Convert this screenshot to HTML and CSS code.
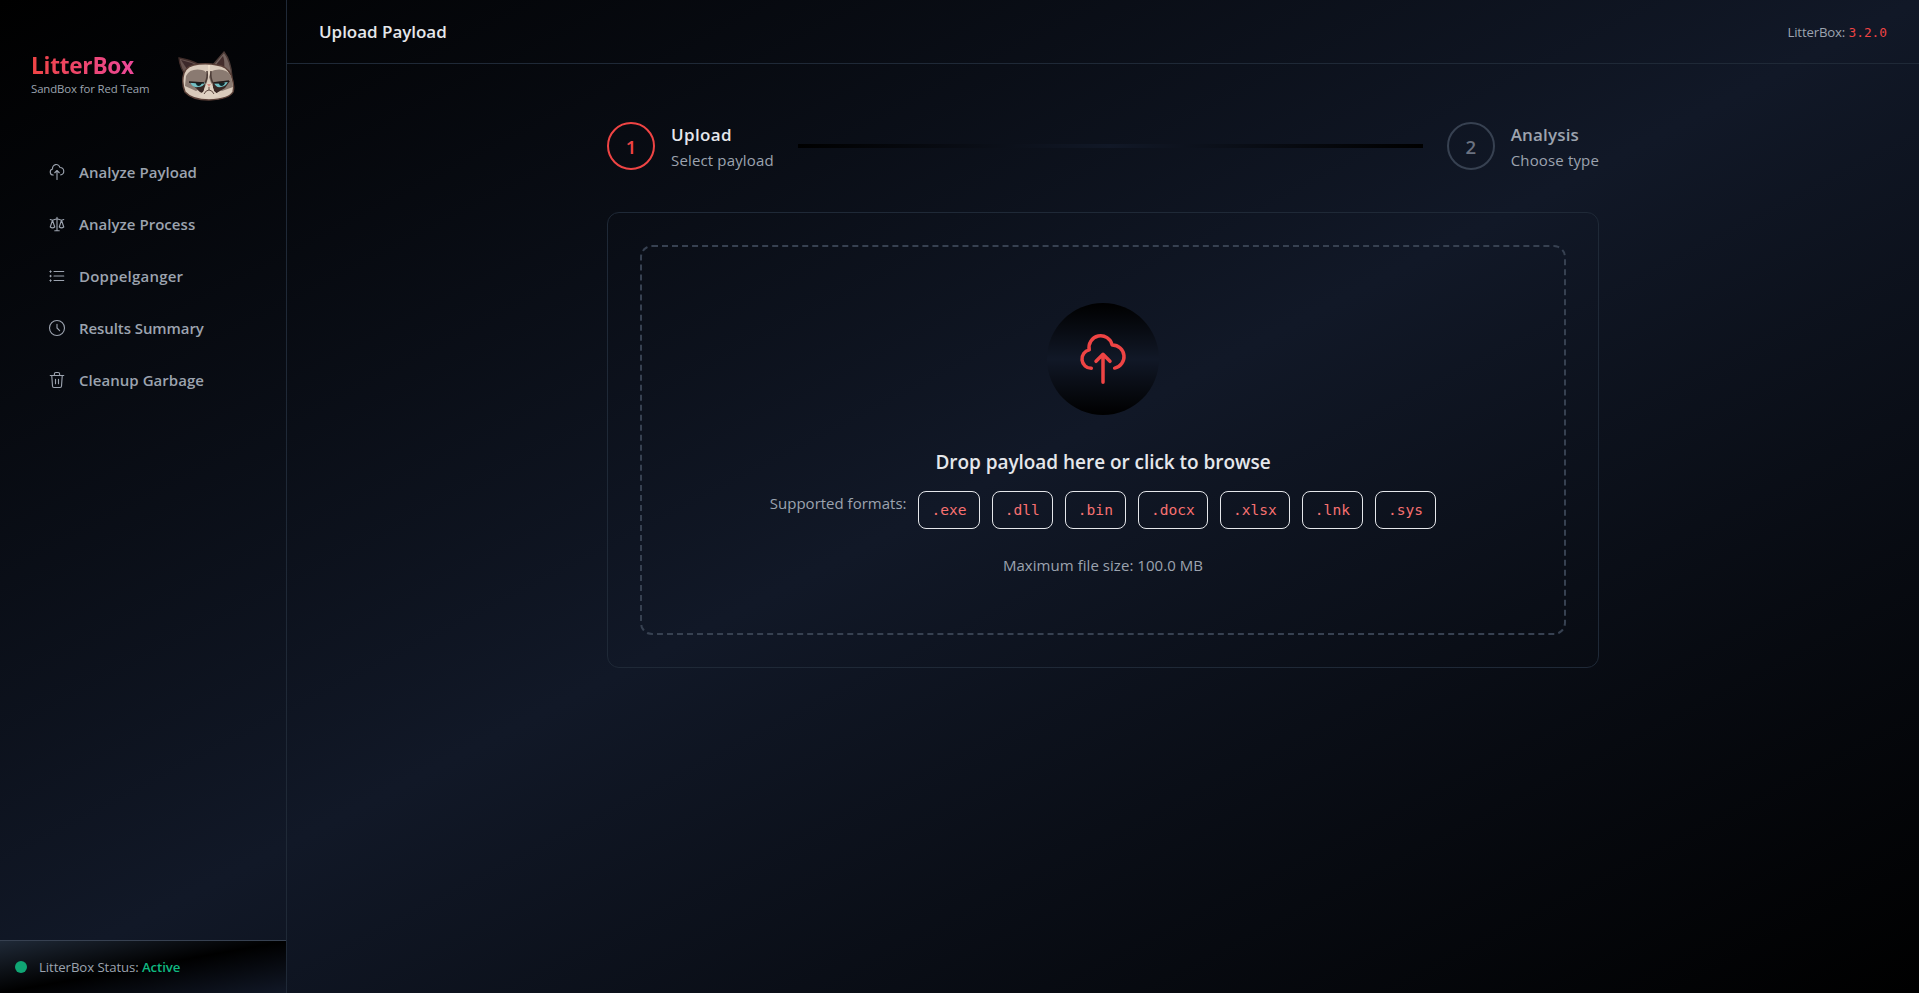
FILE: index.html
```html
<!DOCTYPE html>
<html lang="en">
<head>
<meta charset="utf-8">
<title>LitterBox</title>
<link rel="stylesheet" href="styles.css">
</head>
<body>
<svg class="sprite" width="0" height="0" aria-hidden="true">
  <symbol id="cloud-up" viewBox="0 0 24 24"><path d="M7 16a4 4 0 0 1-.88-7.903A5 5 0 1 1 15.9 6L16 6a5 5 0 0 1 1 9.9M15 13l-3-3m0 0l-3 3m3-3v12"/></symbol>
</svg>
<div class="app">
  <aside class="sidebar">
    <div class="brand">
      <div class="brand-text">
        <div class="brand-name">LitterBox</div>
        <div class="brand-sub">SandBox for Red Team</div>
      </div>
      <svg class="cat" viewBox="0 0 58 52">
        <path d="M2 8Q14 10 23 15L10 27Q3 19 2 8Z" fill="#67534f" stroke="#402c29" stroke-width="1.4"/>
        <path d="M4 10Q13 12 21 16L10 19Z" fill="#3d292a"/>
        <path d="M35 16L47 2Q54 11 55 27L44 22Z" fill="#75645f" stroke="#4a3935" stroke-width="1.4"/>
        <path d="M38 16L46 6Q48 11 47 20Z" fill="#432d2c"/>
        <path d="M7 23Q10 15 22 14Q32 13 40 15Q50 16 54 25Q58 35 56 42Q52 49 32 50Q15 50 8 42Q4 32 7 23Z" fill="#d9cabb" stroke="#5a4038" stroke-width="1.5"/>
        <path d="M9 26Q13 18 25 20Q30 21 31 27L29 36L19 41L8 36Z" fill="#8a7a71"/>
        <path d="M54 26Q49 18 38 20Q33 21 32 27L35 36L45 41L56 37Z" fill="#8a7a71"/>
        <path d="M12 32L27 32L28 36L26 43Q23 43 20 39ZM36 32L53 31L48 38L38 44L36 38Z" fill="#382724"/>
        <path d="M13 32Q15 38 21 37Q27 37 28 32L22 34Z" fill="#73c0c5"/>
        <path d="M37 33Q39 38 44 37Q50 36 51 31L44 34Z" fill="#73c0c5"/>
        <path d="M19 33h6q-1 3-3 3q-3 0-3-3M42 33h6q-1 3-3 3q-3 0-3-3" fill="#102528"/>
        <path d="M12 32L27 33M37 33L52 31" stroke="#211b1b" stroke-width="1.7"/>
        <path d="M30 21Q31 28 28 33M34 21Q33 28 36 33" fill="none" stroke="#4b3b36" stroke-width="1.5"/>
        <path d="M31 15L32 27L33 15Z" fill="#efe0cc"/>
        <path d="M29 34L32 32L35 34L37 41L43 46L32 49L21 46L27 41Z" fill="#dfd1c2"/>
        <path d="M30 34h4l-2 3Z" fill="#d28d83"/>
        <path d="M32 37v3q-3 0-5 4M32 40q3 0 5 4" fill="none" stroke="#5c473f"/>
      </svg>
    </div>
    <nav class="nav">
      <a class="nav-item"><svg class="icon"><use href="#cloud-up"/></svg><span>Analyze Payload</span></a>
      <a class="nav-item"><svg class="icon" viewBox="0 0 24 24"><path d="M3 6l3 1m0 0l-3 9a5.002 5.002 0 0 0 6.001 0M6 7l3 9M6 7l6-2m6 2l3-1m-3 1l-3 9a5.002 5.002 0 0 0 6.001 0M18 7l3 9m-3-9l-6-2m0-2v2m0 16V5m0 16H9m3 0h3"/></svg><span>Analyze Process</span></a>
      <a class="nav-item"><svg class="icon" viewBox="0 0 24 24"><path d="M8 6h13M8 12h13M8 18h13M2.5 6h1.8M2.5 12h1.8M2.5 18h1.8M3.4 5v2M3.4 11v2M3.4 17v2"/></svg><span class="wide">Doppelganger</span></a>
      <a class="nav-item"><svg class="icon" viewBox="0 0 24 24"><circle cx="12" cy="12" r="10"/><path d="M12 7v5l3.5 3.5"/></svg><span class="tight">Results Summary</span></a>
      <a class="nav-item"><svg class="icon" viewBox="0 0 24 24"><path d="M3 6h18M19 6l-1 14a2 2 0 0 1-2 2H8a2 2 0 0 1-2-2L5 6M8.500 6V4a2 2 0 0 1 2-2h3a2 2 0 0 1 2 2v2M10 11v6M14 11v6"/></svg><span>Cleanup Garbage</span></a>
    </nav>
    <div class="status">
      <span class="dot"></span>
      <span class="status-text">LitterBox Status: <b>Active</b></span>
    </div>
  </aside>
  <div class="content">
    <header class="topbar">
      <h1>Upload Payload</h1>
      <div class="version">LitterBox: <code>3.2.0</code></div>
    </header>
    <main class="main">
      <div class="steps">
        <div class="step active">
          <div class="num">1</div>
          <div class="step-text"><div class="step-title">Upload</div><div class="step-sub">Select payload</div></div>
        </div>
        <div class="connector"></div>
        <div class="step">
          <div class="num">2</div>
          <div class="step-text"><div class="step-title">Analysis</div><div class="step-sub">Choose type</div></div>
        </div>
      </div>
      <section class="card">
        <div class="drop">
          <div class="drop-icon"><svg><use href="#cloud-up"/></svg></div>
          <h2>Drop payload here or click to browse</h2>
          <div class="formats">
            <span class="formats-label">Supported formats:</span>
            <code>.exe</code><code>.dll</code><code>.bin</code><code>.docx</code><code>.xlsx</code><code>.lnk</code><code>.sys</code>
          </div>
          <p class="max">Maximum file size: 100.0 MB</p>
        </div>
      </section>
    </main>
  </div>
</div>
</body>
</html>
```
FILE: styles.css
```css
* { box-sizing: border-box; margin: 0; padding: 0; }
body {
  height: 993px;
  overflow: hidden;
  font-family: "Open Sans", "Noto Sans", sans-serif;
  font-size: 15px;
  line-height: 24px;
  color: #9ca3af;
  background: linear-gradient(to bottom right, #000, #111827 50%, #000);
}
.sprite { position: absolute; }
.app { display: flex; height: 993px; }
.sidebar {
  width: 287px;
  flex: none;
  display: flex;
  flex-direction: column;
  border-right: 1px solid #1f2937;
}
.brand { display: flex; height: 146px; padding: 50px 0 0 31px; }
.brand-text { width: 146px; }
.brand-name {
  width: 104px;
  font-size: 22.6px;
  font-weight: 700;
  line-height: 32px;
  letter-spacing: -0.25px;
  white-space: nowrap;
  background: linear-gradient(to right, #ef4444, #ec4899);
  -webkit-background-clip: text;
  background-clip: text;
  color: transparent;
}
.brand-sub { font-size: 11.4px; line-height: 13px; letter-spacing: -0.12px; white-space: nowrap; }
.cat { width: 58px; height: 52px; }
.nav { flex: 1; display: flex; flex-direction: column; }
.nav-item {
  display: flex;
  align-items: center;
  gap: 13px;
  height: 52px;
  padding-left: 48px;
  font-weight: 600;
  letter-spacing: 0.04px;
  color: #9ca3af;
}
.wide { letter-spacing: 0.22px; }
.tight { letter-spacing: -0.08px; }
.icon { width: 18px; height: 18px; }
svg.icon, .drop-icon svg {
  fill: none;
  stroke: currentColor;
  stroke-width: 1.5;
  stroke-linecap: round;
  stroke-linejoin: round;
  overflow: visible;
}
.status {
  display: flex;
  align-items: center;
  gap: 12px;
  height: 53px;
  padding-left: 15px;
  border-top: 1px solid #374151;
  background: linear-gradient(to bottom right, #1f2937, #000 50%, #111827);
  font-size: 13.2px;
  letter-spacing: -0.08px;
}
.status b { color: #10b981; font-weight: 600; }
.dot { width: 12px; height: 12px; border-radius: 50%; background: #10a674; }
.content { flex: 1; }
.topbar {
  display: flex;
  align-items: center;
  justify-content: space-between;
  height: 64px;
  padding: 0 32px;
  border-bottom: 1px solid #1f2937;
}
h1 { padding-top: 1px; font-size: 17px; font-weight: 600; letter-spacing: -0.03px; color: #e5e7eb; }
.version { font-size: 13.2px; letter-spacing: -0.15px; }
.version code { color: #ef4444; font: 12.8px "DejaVu Sans Mono", monospace; letter-spacing: 0; }
.main { width: 992px; margin: 0 auto; padding-top: 56px; }
.steps { display: flex; align-items: center; height: 52px; }
.step { display: flex; align-items: center; gap: 16px; white-space: nowrap; }
.num {
  display: flex;
  align-items: center;
  justify-content: center;
  width: 48px;
  height: 48px;
  padding-top: 2px;
  border: 2px solid #374151;
  border-radius: 50%;
  font-size: 18.6px;
  font-weight: 600;
  color: #6b7280;
}
.step-text { padding-top: 2px; }
.step-title { font-size: 17px; line-height: 26px; font-weight: 600; letter-spacing: 0.15px; }
.step-sub { line-height: 24px; letter-spacing: 0.15px; }
.active .step-title { letter-spacing: 0.35px; }
.active .num { border-color: #ef4444; color: #ef4444; }
.active .step-title { color: #e5e7eb; }
.connector {
  flex: 1;
  height: 4px;
  margin: 0 24px;
  background: linear-gradient(to right, #000, #111827 50%, #000);
}
.card {
  height: 456px;
  margin-top: 40px;
  padding: 32px;
  border: 1px solid #1f2937;
  border-radius: 12px;
}
.drop {
  display: flex;
  flex-direction: column;
  align-items: center;
  height: 390px;
  padding-top: 56px;
  border: 2px dashed #374151;
  border-radius: 12px;
}
.drop-icon {
  display: flex;
  align-items: center;
  justify-content: center;
  width: 112px;
  height: 112px;
  border-radius: 50%;
  color: #ef4444;
  background: linear-gradient(to bottom, #000, #111827 50%, #000);
}
.drop-icon svg { width: 56px; height: 56px; }
h2 { margin-top: 33px; font-size: 19px; line-height: 28px; font-weight: 600; letter-spacing: -0.04px; color: #e5e7eb; }
.formats { display: flex; gap: 12px; margin-top: 15px; }
.formats code {
  height: 38px;
  padding: 0 12px;
  border: 1px solid #e5e7eb;
  border-radius: 8px;
  font: 14.6px/36px "DejaVu Sans Mono", monospace;
  color: #f87171;
}
.max { margin-top: 24px; letter-spacing: 0.05px; }
```
